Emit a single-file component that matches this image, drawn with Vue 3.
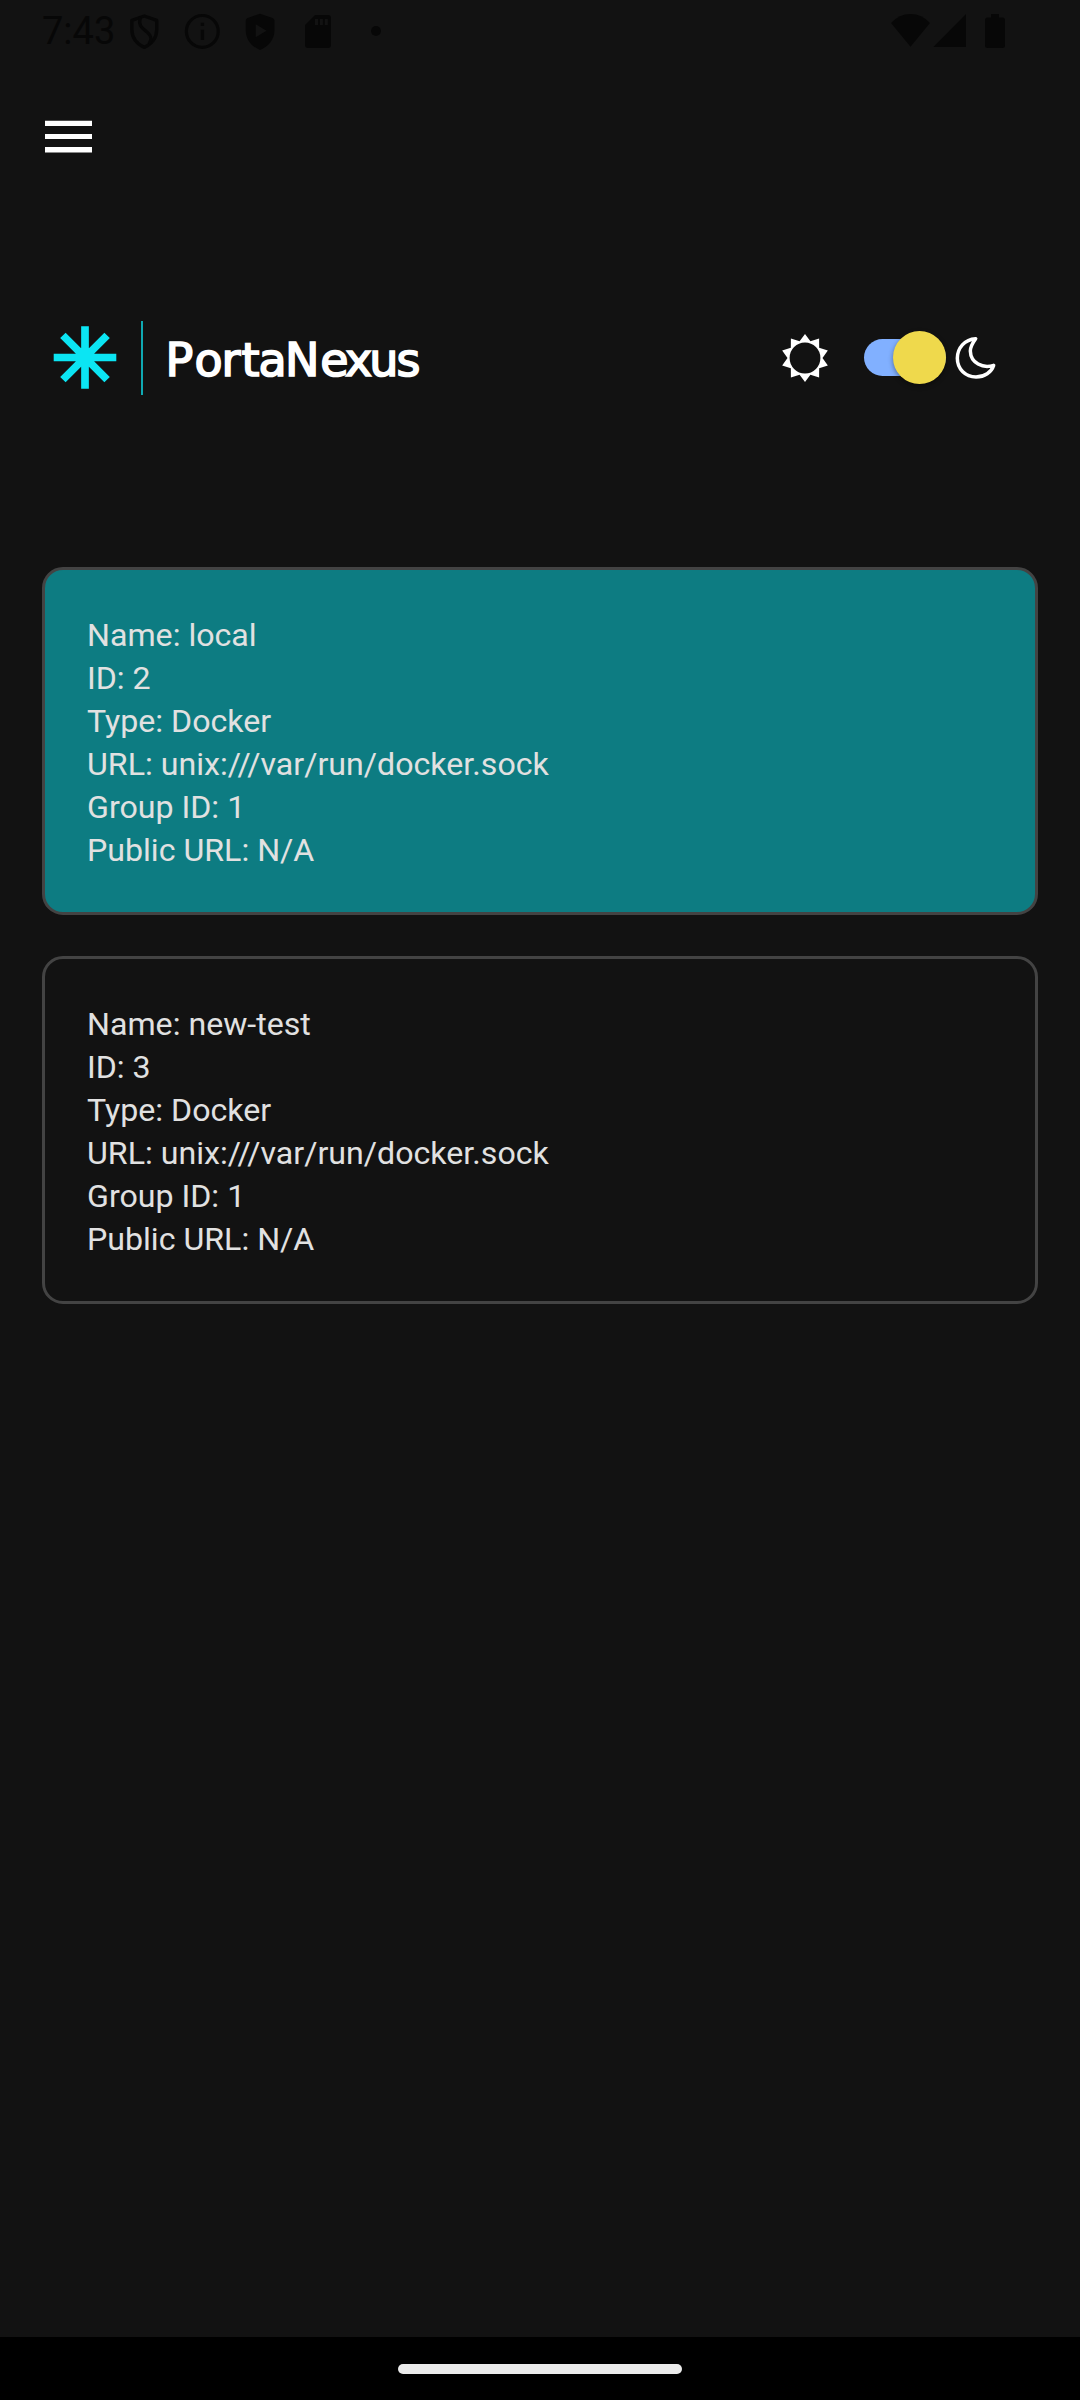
<script setup>
const endpoints = [
  { name: 'local', id: 2, type: 'Docker', url: 'unix:///var/run/docker.sock', group: 1, publicUrl: 'N/A', active: true },
  { name: 'new-test', id: 3, type: 'Docker', url: 'unix:///var/run/docker.sock', group: 1, publicUrl: 'N/A', active: false },
]

// Ten-pointed sun outline, tips at radius 24 and valleys at radius 17.5
const sunPoints = Array.from({ length: 20 }, (_, i) => {
  const r = i % 2 ? 17.5 : 24
  const a = (i * Math.PI) / 10
  return `${(r * Math.sin(a)).toFixed(2)},${(-r * Math.cos(a)).toFixed(2)}`
}).join(' ')
</script>

<template>
  <div class="screen">
    <div class="status">
      <span class="time">7:43</span>
      <svg class="left-icons" width="260" height="44" viewBox="125 9 260 44">
        <path d="M144.3 16 L156.700 20.300 V30 C156.700 38 151.500 44.500 144.300 47.300 C137 44.500 131.900 38 131.900 30 V20.300 Z" fill="none" stroke="#070707" stroke-width="3.4" stroke-linejoin="round" />
        <path d="M140.300 17 C138 26 142 28 147 32 C152.500 36.500 151.500 40 149 44" fill="none" stroke="#070707" stroke-width="3.4" />
        <circle cx="202.300" cy="31.400" r="15.900" fill="none" stroke="#070707" stroke-width="3.2" />
        <path d="M200.700 22.700h3.400v3.400h-3.400zM200.700 29.700h3.400v10.300h-3.400z" fill="#070707" />
        <path fill-rule="evenodd" d="M260 13.700 L272.500 18 Q274.500 18.800 274.500 20.800 V30 C274.500 39.500 268.500 46.500 260 50 C251.500 46.500 245.700 39.500 245.700 30 V20.800 Q245.700 18.800 247.700 18 Z M255.700 24.300 V37.200 L266.500 30.700 Z" fill="#070707" />
        <path fill-rule="evenodd" d="M315 15 H328 Q331 15 331 18 V45 Q331 48 328 48 H308 Q305 48 305 45 V25 Z M315 19v6h3v-6z M319.900 19v6h3v-6z M324.800 19v6h3v-6z" fill="#070707" />
        <circle cx="376" cy="31" r="5" fill="#070707" />
      </svg>
      <svg class="right-icons" width="120" height="44" viewBox="888 9 120 44">
        <path d="M891 23 Q899 14 910.500 14 Q922 14 930 23 L910.500 46.700 Z" fill="#070707" />
        <path d="M966 14 V47 H933.300 Z" fill="#070707" />
        <path d="M991 14 H999 V17.500 H1002.500 Q1005 17.500 1005 20 V45.500 Q1005 48 1002.500 48 H987.500 Q985 48 985 45.500 V20 Q985 17.500 987.500 17.500 H991 Z" fill="#070707" />
      </svg>
    </div>

    <div class="appbar">
      <svg width="47" height="34" viewBox="0 0 47 34">
        <path d="M0 .75h47V6H0zM0 13.900h47v5.200H0zM0 27h47v5.500H0z" fill="#fff" />
      </svg>
    </div>

    <div class="brand">
      <svg class="logo" width="380" height="80" viewBox="50 318 380 80">
        <g stroke="#0be5f3" stroke-width="7.7">
          <path d="M53.700 357.500h62.600M85 326.200v62.600M62.900 335.400l44.200 44.200M107.100 335.400l-44.200 44.200" />
        </g>
        <rect x="141" y="321" width="2" height="74" fill="#0fa9b2" />
        <text x="165.400 194.400 221.600 241.600 258.600 285 320.300 345 369.300 396.500" y="376.300" class="wordmark">PortaNexus</text>
      </svg>
      <svg class="sun" width="50" height="50" viewBox="-25 -25 50 50">
        <polygon :points="sunPoints" fill="#fff" />
        <circle r="15.400" fill="#121212" />
      </svg>
      <div class="switch"><div class="thumb"></div></div>
      <svg class="moon" width="43.330" height="46.670" viewBox="580 105 130 140">
        <path d="M645 116 C612 118 590 144 590 175 C590 208 615 231 646 231 C672 231 692 217 699 196 C667 206 630 190 629 153 C629 138 637 127 645 116 Z" fill="none" stroke="#fff" stroke-width="10.500" stroke-linejoin="round" />
      </svg>
    </div>

    <div class="list">
      <div v-for="e in endpoints" :key="e.id" class="card" :class="{ active: e.active }">
        <div>Name: {{ e.name }}</div>
        <div>ID: {{ e.id }}</div>
        <div>Type: {{ e.type }}</div>
        <div>URL: {{ e.url }}</div>
        <div>Group ID: {{ e.group }}</div>
        <div>Public URL: {{ e.publicUrl }}</div>
      </div>
    </div>

    <div class="nav"><div class="pill"></div></div>
  </div>
</template>

<style>
body {
  background: #121212;
}
</style>

<style scoped>
.screen {
  display: flex;
  flex-direction: column;
  width: 1080px;
  height: 2400px;
  background: #121212;
  font-family: Roboto, "Liberation Sans", sans-serif;
}
.status {
  display: flex;
  height: 63px;
  padding: 9px 72px 0 42px;
  box-sizing: border-box;
}
.time {
  width: 83px;
  font-size: 38px;
  line-height: 44px;
  color: #070707;
}
.right-icons {
  margin-left: auto;
}
.appbar {
  height: 148px;
  padding: 57px 45px 0;
  box-sizing: border-box;
}
.appbar svg {
  display: block;
}
.brand {
  display: flex;
  align-items: center;
  height: 294px;
  padding-left: 50px;
  margin-bottom: 62px;
  box-sizing: border-box;
}
.wordmark {
  font-family: "DejaVu Sans", sans-serif;
  font-size: 46px;
  fill: #fff;
  stroke: #fff;
  stroke-width: 1.7px;
}
.sun {
  margin-left: 350px;
}
.switch {
  display: flex;
  align-items: center;
  justify-content: flex-end;
  width: 82px;
  height: 37px;
  margin: 0 0 1px 33.5px;
  border-radius: 19px;
  background: #81b0ff;
}
.thumb {
  flex: none;
  width: 53px;
  height: 53px;
  border-radius: 50%;
  background: #efd94c;
  box-shadow: 0 2px 5px rgba(0, 0, 0, 0.4);
}
.moon {
  margin-left: 8px;
}
.list {
  display: flex;
  flex: 1;
  flex-direction: column;
  gap: 41.5px;
  padding: 0 42px;
}
.card {
  height: 347.6px;
  padding: 44px 42px;
  box-sizing: border-box;
  border: 3px solid #434343;
  border-radius: 21px;
  color: #e1e1e1;
  font-size: 32.15px;
  line-height: 43px;
}
.active {
  background: #0d7c82;
}
.nav {
  display: flex;
  justify-content: center;
  height: 63px;
  padding-top: 27px;
  box-sizing: border-box;
  background: #000;
}
.pill {
  width: 284px;
  height: 10px;
  border-radius: 5px;
  background: #ebebeb;
}
</style>
